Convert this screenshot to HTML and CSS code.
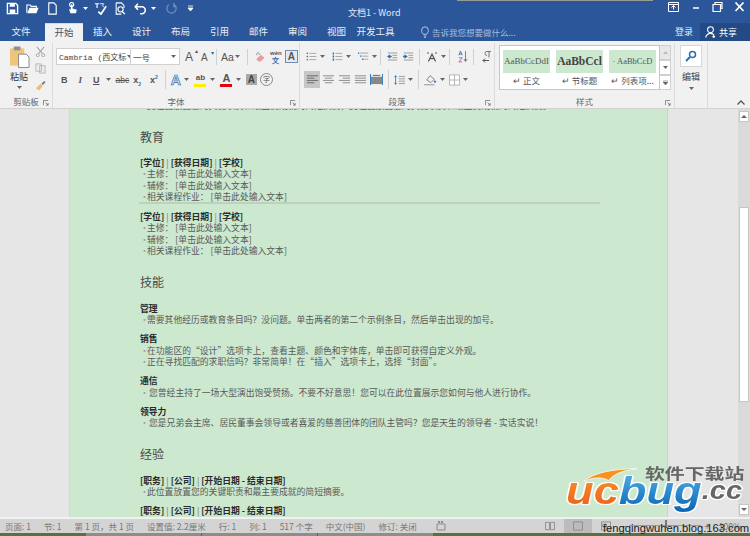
FILE: index.html
```html
<!DOCTYPE html>
<html lang="zh-CN">
<head>
<meta charset="utf-8">
<title>文档1 - Word</title>
<link rel="stylesheet" href="styles.css">
</head>
<body>
<svg class="defs" width="0" height="0">
  <symbol id="caret" viewBox="0 0 5 3"><path d="M0 0h5L2.500 3z" fill="#666"/></symbol>
  <symbol id="caretw" viewBox="0 0 5 3"><path d="M0 0h5L2.500 3z" fill="#fff"/></symbol>
  <symbol id="launch" viewBox="0 0 7 7"><path d="M.5 6V.5H6M3 3l3 3M6 3.500V6H3.500" fill="none" stroke="#777"/></symbol>
</svg>
<div class="app">
  <div class="top-sliver"></div>
  <header class="titlebar">
    <div class="qat">
      <svg class="qi" viewBox="0 0 14 14"><path d="M1.500 1.500h9l2 2v9h-11z" fill="none" stroke="#fff" stroke-width="1.500"/><path d="M4 1.500h5.500v3.500H4zM4 8h6v4.500H4z" fill="#fff"/></svg>
      <svg class="qi" viewBox="0 0 15 14"><path d="M1 12V3h4l1 1.500h6V6" fill="none" stroke="#fff" stroke-width="1.300"/><path d="M1.500 12.500L4 6h10.500l-2.500 6.500z" fill="#fff"/></svg>
      <svg class="qi" viewBox="0 0 14 14"><path d="M3 1h5.500L11 3.500V13H3z" fill="none" stroke="#fff" stroke-width="1.200"/></svg>
      <span class="qgroup"><svg class="qi" viewBox="0 0 12 15"><circle cx="5" cy="3" r="2.400" fill="none" stroke="#fff" stroke-width="1.300"/><path d="M4 3v6L2 8l1.500 5h6.500l1-4-5-1.500V3" fill="#fff"/></svg><svg class="ca" viewBox="0 0 5 3"><use href="#caretw"/></svg></span>
      <svg class="qi" viewBox="0 0 15 15"><path d="M1 2h5M3.500 2v5" stroke="#fff" stroke-width="1.300" fill="none"/><path d="M5 11l3 3 6-9" stroke="#fff" stroke-width="2" fill="none"/><path d="M7 2h4l-1 2 1 2" stroke="#fff" fill="none"/></svg>
      <svg class="qi" viewBox="0 0 14 15"><path d="M2 1h6l3 3v3M2 1v13h6" fill="none" stroke="#fff" stroke-width="1.200"/><circle cx="7" cy="8.500" r="3" fill="none" stroke="#fff" stroke-width="1.300"/><path d="M9 11l3 3" stroke="#fff" stroke-width="1.600"/></svg>
      <span class="qgroup"><svg class="qi" viewBox="0 0 15 14"><path d="M4.500 1.500L1.500 5l3 3.500" fill="none" stroke="#fff" stroke-width="1.800"/><path d="M2 5h7a4 4 0 0 1 0 8H7" fill="none" stroke="#fff" stroke-width="1.800"/></svg><svg class="ca" viewBox="0 0 5 3"><use href="#caretw"/></svg></span>
      <svg class="qi dim" viewBox="0 0 14 14"><path d="M4 3a5 5 0 1 0 6 0M9.500 1v4h3" fill="none" stroke="#6f8fc0" stroke-width="1.300"/></svg>
      <svg class="qi small" viewBox="0 0 7 7"><path d="M1 1h5M1 3h5L3.500 6z" stroke="#fff" fill="#fff" stroke-width=".8"/></svg>
    </div>
    <div class="doc-title">文档1 - Word</div>
    <div class="win">
      <svg class="wi" viewBox="0 0 11 10"><path d="M.5.500h10v9H.5z" fill="none" stroke="#fff"/><path d="M.5 2.500h10" stroke="#fff"/><path d="M5.500 3.500v4M3.500 5.500L5.500 3.500 7.500 5.500" fill="none" stroke="#fff"/></svg>
      <svg class="wi" viewBox="0 0 11 10"><path d="M3 6h6" stroke="#fff" stroke-width="1.500"/></svg>
      <svg class="wi" viewBox="0 0 11 10"><path d="M3 2V.5h7v6H8.500M1 2.500h7.500v7H1z" fill="none" stroke="#fff" stroke-width="1.200"/></svg>
      <svg class="wi" viewBox="0 0 11 10"><path d="M1.500.5l8 8.500M9.500.5l-8 8.500" stroke="#fff" stroke-width="1.700"/></svg>
    </div>
  </header>
  <nav class="tabs">
    <span class="tab file">文件</span>
    <span class="tab active">开始</span>
    <span class="tab">插入</span>
    <span class="tab">设计</span>
    <span class="tab">布局</span>
    <span class="tab">引用</span>
    <span class="tab">邮件</span>
    <span class="tab">审阅</span>
    <span class="tab">视图</span>
    <span class="tab">开发工具</span>
    <span class="tell">
      <svg class="bulb" viewBox="0 0 9 13"><path d="M2.500 9C1.500 7.500.7 6.500.7 4.500a3.800 3.800 0 0 1 7.600 0C8.300 6.500 7.500 7.500 6.500 9zM3 11h3M3.500 12.500h2" fill="none" stroke="#c6d3e6"/></svg>告诉我您想要做什么...
    </span>
    <span class="login">登录</span>
    <span class="share"><svg class="person" viewBox="0 0 12 13"><circle cx="6" cy="4" r="3.200" fill="none" stroke="#fff" stroke-width="1.200"/><path d="M.7 12.500C1.500 9.500 3 8 6 8c1.500 0 3 .5 4 2M9.500 10v3M8 11.500h3" fill="none" stroke="#fff" stroke-width="1.200"/></svg>共享</span>
  </nav>
  <section class="ribbon">
    <div class="group g-clip">
      <div class="g-body clip-body">
        <div class="paste">
          <svg class="paste-ico" viewBox="0 0 22 24"><path d="M1 3h15v18H1z" fill="#edc67c"/><path d="M5 1h7v4H5z" fill="#8f8f8f"/><path d="M10 9h8l3 3v11H10z" fill="#fff" stroke="#888"/></svg>
          <span class="paste-t">粘贴</span>
          <svg class="ca" viewBox="0 0 5 3"><use href="#caret"/></svg>
        </div>
        <div class="clip-side">
          <svg class="ci" viewBox="0 0 12 12"><path d="M2 1l6 7M10 1L4 8" stroke="#a6a6a6" fill="none" stroke-width="1.200"/><circle cx="3" cy="10" r="1.700" fill="none" stroke="#a6a6a6"/><circle cx="9" cy="10" r="1.700" fill="none" stroke="#a6a6a6"/></svg>
          <svg class="ci" viewBox="0 0 12 12"><path d="M1 1h6v8H1zM5 3h6v8H5z" fill="#eee" stroke="#b5b5b5"/></svg>
          <svg class="ci" viewBox="0 0 12 12"><path d="M7 4l3-3 1.500 1.500-3 3z" fill="#777"/><path d="M1 9l5-5 2.500 2.500-4 5z" fill="#e5bf70"/></svg>
        </div>
      </div>
      <div class="g-label">剪贴板<svg class="launch" viewBox="0 0 7 7"><use href="#launch"/></svg></div>
    </div>
    <div class="group g-font">
      <div class="g-body font-body">
        <div class="rrow">
          <div class="combo">
            <span class="cb cb-font">Cambria (西文标<svg class="ca" viewBox="0 0 5 3"><use href="#caret"/></svg></span>
            <span class="cb cb-size">一号<svg class="ca" viewBox="0 0 5 3"><use href="#caret"/></svg></span>
          </div>
          <span class="glyph g16">A<i class="hat">▴</i></span>
          <span class="glyph g14">A<i class="hat blue">▾</i></span>
          <span class="vsep fs1"></span>
          <span class="glyph g-aa">Aa<svg class="ca" viewBox="0 0 5 3"><use href="#caret"/></svg></span>
          <span class="vsep fs2"></span>
          <svg class="ri" viewBox="0 0 16 16"><path d="M6 1L3 5h1M5.500 4h3" stroke="#7a7a7a" fill="none"/><path d="M3 11l6-6 5 4-5 5H6z" fill="#f09aa0"/></svg>
          <span class="wen"><b>wén</b><b class="wen-b">文</b></span>
          <span class="boxA">A</span>
        </div>
        <div class="rrow row2">
          <b class="fmt bd">B</b>
          <i class="fmt it">I</i>
          <span class="fmt un">U</span><svg class="ca" viewBox="0 0 5 3"><use href="#caret"/></svg>
          <span class="fmt st">abc</span>
          <span class="fmt sub">x<sub>2</sub></span>
          <span class="fmt sub">x<sup>2</sup></span>
          <span class="vsep tall"></span>
          <span class="outlineA">A</span><svg class="ca" viewBox="0 0 5 3"><use href="#caret"/></svg>
          <span class="hl"><span class="hl-t">ab</span><span class="bar yellow"></span></span><svg class="ca" viewBox="0 0 5 3"><use href="#caret"/></svg>
          <span class="hl"><span class="hl-a">A</span><span class="bar red"></span></span><svg class="ca" viewBox="0 0 5 3"><use href="#caret"/></svg>
          <span class="shadeA">A</span>
          <span class="circ">字</span>
        </div>
      </div>
      <div class="g-label">字体<svg class="launch" viewBox="0 0 7 7"><use href="#launch"/></svg></div>
    </div>
    <div class="group g-para">
      <div class="g-body para-body">
        <div class="rrow prow r1">
          <svg class="pi" viewBox="0 0 16 13"><path d="M1 1h2v2H1zM1 5.500h2v2H1zM1 10h2v2H1z" fill="#2b6cb0"/><path d="M5 2h10M5 6.500h10M5 11h10" stroke="#8a8a8a"/></svg><svg class="ca" viewBox="0 0 5 3"><use href="#caret"/></svg>
          <svg class="pi" viewBox="0 0 16 13"><path d="M1 .5h2v3H1zM1 5h2v3H1zM1 9.500h2v3H1z" fill="#2b6cb0"/><path d="M5 2h10M5 6.500h10M5 11h10" stroke="#8a8a8a"/></svg><svg class="ca" viewBox="0 0 5 3"><use href="#caret"/></svg>
          <svg class="pi" viewBox="0 0 16 13"><path d="M0 .5h2v2H0zM3 5h2v2H3zM6 9.500h2v2H6z" fill="#2b6cb0"/><path d="M3 1.500h12M6 6h9M9 10.500h6" stroke="#8a8a8a"/></svg><svg class="ca" viewBox="0 0 5 3"><use href="#caret"/></svg>
          <span class="vsep"></span>
          <svg class="pi" viewBox="0 0 14 12"><path d="M1 1.500h12M7 4.500h6M7 7.500h6M1 10.500h12" stroke="#8a8a8a"/><path d="M0 6l4-3v2h2v2H4v2z" fill="#2b6cb0"/></svg>
          <svg class="pi" viewBox="0 0 14 12"><path d="M1 1.500h12M7 4.500h6M7 7.500h6M1 10.500h12" stroke="#8a8a8a"/><path d="M6 6L2 3v2H0v2h2v2z" fill="#2b6cb0"/></svg>
          <span class="vsep s-i"></span>
          <svg class="pi wide" viewBox="0 0 15 13"><path d="M3 12L7.500 3 12 12M5 8.500h5" stroke="#555" fill="none" stroke-width="1.500"/><path d="M1 1h3L2.500 3zM11 1h3l-1.500 2z" fill="#2b6cb0"/></svg><svg class="ca" viewBox="0 0 5 3"><use href="#caret"/></svg>
          <span class="vsep"></span>
          <svg class="pi narrow" viewBox="0 0 12 15"><path d="M1 6L3 1l2 5M1.500 4.500h3" stroke="#2b6cb0" fill="none"/><path d="M1 9h4L1 14h4" stroke="#9b59b6" fill="none"/><path d="M9 1v12M7 10.500L9 13.500 11 10.500" stroke="#666" fill="none"/></svg>
          <span class="vsep s-i"></span>
          <svg class="pi narrow" viewBox="0 0 10 12"><path d="M5 1h4M7 1v6M5 1a2 2 0 0 0 0 4" stroke="#777" fill="none"/><path d="M1 10h6M3 8l-2 2 2 2" stroke="#555" fill="none"/></svg>
        </div>
        <div class="rrow prow row2 r2">
          <span class="align on"><svg class="pi" viewBox="0 0 14 11"><path d="M1 1.500h12M1 4h8M1 6.500h12M1 9h8" stroke="#666"/></svg></span>
          <span class="align"><svg class="pi" viewBox="0 0 14 11"><path d="M1 1.500h12M3 4h8M1 6.500h12M3 9h8" stroke="#888"/></svg></span>
          <span class="align"><svg class="pi" viewBox="0 0 14 11"><path d="M1 1.500h12M5 4h8M1 6.500h12M5 9h8" stroke="#888"/></svg></span>
          <span class="align"><svg class="pi" viewBox="0 0 14 11"><path d="M1 1.500h12M1 4h12M1 6.500h12M1 9h12" stroke="#888"/></svg></span>
          <span class="align"><svg class="pi" viewBox="0 0 14 12"><path d="M1 3h12v8H1z" fill="#888"/><path d="M.5 0v12M13.500 0v12" stroke="#2b6cb0"/><path d="M3 1.500h8" stroke="#2b6cb0"/></svg></span>
          <span class="vsep tall"></span>
          <svg class="pi ls" viewBox="0 0 14 13"><path d="M2 1v11M.5 3L2 1l1.500 2M.5 10L2 12l1.500-2" stroke="#2b6cb0" fill="none"/><path d="M6 2h8M6 5h8M6 8h8M6 11h8" stroke="#888"/></svg><svg class="ca" viewBox="0 0 5 3"><use href="#caret"/></svg>
          <span class="vsep tall"></span>
          <svg class="pi shade" viewBox="0 0 15 14"><path d="M3 7l4-5 5 4-4 4z" fill="none" stroke="#777"/><path d="M12 8l1.500 2" stroke="#2b6cb0" stroke-width="2"/><path d="M0 12.500h12" stroke="#aaa" stroke-width="1.500"/></svg><svg class="ca m4" viewBox="0 0 5 3"><use href="#caret"/></svg>
          <svg class="pi" viewBox="0 0 13 13"><path d="M.5.500h12v12H.5zM6.500.5v12M.5 6.500h12" stroke="#aaa" fill="#fff"/></svg><svg class="ca" viewBox="0 0 5 3"><use href="#caret"/></svg>
        </div>
      </div>
      <div class="g-label">段落<svg class="launch" viewBox="0 0 7 7"><use href="#launch"/></svg></div>
    </div>
    <div class="group g-style">
      <div class="g-body style-body">
        <div class="gallery">
          <div class="sty"><div class="sty-s s1">AaBbCcDdI</div><div class="sty-n">↵ 正文</div></div>
          <div class="sty"><div class="sty-s s2">AaBbCcl</div><div class="sty-n">↵ 节标题</div></div>
          <div class="sty"><div class="sty-s s1 s3">· AaBbCcD</div><div class="sty-n">↵ 列表项...</div></div>
        </div>
        <div class="gal-btns">
          <span class="gb muted"><svg class="ga" viewBox="0 0 5 3"><path d="M0 3h5L2.500 0z" fill="#bbb"/></svg></span>
          <span class="gb"><svg class="ga" viewBox="0 0 5 3"><use href="#caret"/></svg></span>
          <span class="gb"><svg class="ga" viewBox="0 0 5 5"><path d="M0 0h5M0 2h5L2.500 5z" stroke="#666" stroke-width=".6" fill="#666"/></svg></span>
        </div>
      </div>
      <div class="g-label">样式<svg class="launch" viewBox="0 0 7 7"><use href="#launch"/></svg></div>
    </div>
    <div class="group g-edit">
      <span class="find"><svg class="lens" viewBox="0 0 12 12"><circle cx="7.500" cy="4.500" r="3" fill="none" stroke="#2b6cb0" stroke-width="1.500"/><path d="M5 7l-4 4" stroke="#2b6cb0" stroke-width="2"/></svg></span>
      <span class="edit-t">编辑</span>
      <svg class="ca" viewBox="0 0 5 3"><use href="#caret"/></svg>
    </div>
    <div class="group g-end">
      <svg class="collapse" viewBox="0 0 8 5"><path d="M.5 4.500L4 1l3.500 3.500" fill="none" stroke="#555" stroke-width="1.300"/></svg>
    </div>
  </section>
  <main class="workspace">
    <div class="gutter left"></div>
    <article class="page">
      <p class="li cut">此位置放置您的关键职责和最主要成就的简短摘要，此位置放置您的关键职责和最主要成就的简短摘要。</p>
      <h2 class="h first">教育</h2>
      <p class="ent">[学位] <span class="pipe">|</span> [获得日期] <span class="pipe">|</span> [学校]</p>
      <p class="li">主修： [单击此处输入文本]</p>
      <p class="li">辅修： [单击此处输入文本]</p>
      <p class="li">相关课程作业： [单击此处输入文本]</p>
      <hr class="rule">
      <p class="ent">[学位] <span class="pipe">|</span> [获得日期] <span class="pipe">|</span> [学校]</p>
      <p class="li">主修： [单击此处输入文本]</p>
      <p class="li">辅修： [单击此处输入文本]</p>
      <p class="li">相关课程作业： [单击此处输入文本]</p>
      <h2 class="h">技能</h2>
      <p class="ent">管理</p>
      <p class="li">需要其他经历或教育条目吗？没问题。单击两者的第二个示例条目，然后单击出现的加号。</p>
      <p class="ent gap">销售</p>
      <p class="li">在功能区的“设计”选项卡上，查看主题、颜色和字体库，单击即可获得自定义外观。</p>
      <p class="li">正在寻找匹配的求职信吗？非常简单！在“插入”选项卡上，选择“封面”。</p>
      <p class="ent gap">通信</p>
      <p class="li in">您曾经主持了一场大型演出饱受赞扬。不要不好意思！您可以在此位置展示您如何与他人进行协作。</p>
      <p class="ent gap">领导力</p>
      <p class="li in">您是兄弟会主席、居民董事会领导或者喜爱的慈善团体的团队主管吗？您是天生的领导者 - 实话实说！</p>
      <h2 class="h">经验</h2>
      <p class="ent">[职务] <span class="pipe">|</span> [公司] <span class="pipe">|</span> [开始日期 - 结束日期]</p>
      <p class="li">此位置放置您的关键职责和最主要成就的简短摘要。</p>
      <p class="ent gap">[职务] <span class="pipe">|</span> [公司] <span class="pipe">|</span> [开始日期 - 结束日期]</p>
    </article>
    <div class="gutter right"></div>
    <div class="scrollbar">
      <span class="sb-btn"><svg class="sb-a" viewBox="0 0 6 3"><path d="M0 3h6L3 0z" fill="#666"/></svg></span>
      <span class="sb-thumb"></span>
      <span class="sb-btn bottom"><svg class="sb-a" viewBox="0 0 6 3"><path d="M0 0h6L3 3z" fill="#666"/></svg></span>
    </div>
  </main>
  <footer class="status">
    <span>页面: 1</span><span>节: 1</span><span>第 1 页，共 1 页</span><span>设置值: 2.2厘米</span><span>行: 1</span><span>列: 1</span><span>517 个字</span><span>中文(中国)</span><span>修订: 关闭</span>
    <svg class="st-i macro" viewBox="0 0 10 10"><path d="M1 3h8v6H1z" fill="none" stroke="#8a8a8a"/><path d="M2 0h2v2H2zM5 0h2v2H5z" fill="#8a8a8a"/></svg>
    <span class="views">
      <span class="view"><svg class="st-i" viewBox="0 0 11 10"><path d="M.5 1H5v8H.5zM6 1h4.500v8H6z" fill="none" stroke="#8a8a8a"/></svg></span>
      <span class="view on"><svg class="st-i" viewBox="0 0 11 10"><path d="M.5.500h10v9H.5z" fill="#bbb" stroke="#8a8a8a"/></svg></span>
      <span class="view"><svg class="st-i" viewBox="0 0 11 10"><path d="M.5.500h10v9H.5zM2 3h4v3H2z" fill="none" stroke="#8a8a8a"/></svg></span>
    </span>
    <span class="zoom"><span class="zm">−</span><span class="slider"><span class="knob"></span></span><span class="zm">+</span><span class="pct">100%</span></span>
  </footer>
  <div class="desktop"><span class="d1"></span><span class="d2"></span><span class="d3"></span></div>
  <div class="blogmark">fengqingwuhen.blog.163.com</div>
  <div class="logo">
    <svg class="swoosh" viewBox="0 0 70 18"><path d="M0 17C12 7 35 1 68 1 50 3 38 8 32 16 22 11 12 12 0 17z" fill="#f7931e" stroke="#fff"/></svg>
    <div class="logo-cn">软件下载站</div>
    <div class="logo-en"><span class="l-o">uc</span><span class="l-b">bug</span><span class="l-c">.cc</span></div>
  </div>
</div>
</body>
</html>
```
FILE: styles.css
```css
* { box-sizing: border-box; }
html, body { margin: 0; padding: 0; }
body {
  width: 750px;
  height: 536px;
  overflow: hidden;
  font-family: "Noto Sans CJK SC", "Liberation Sans", sans-serif;
}
.defs { position: absolute; }
.app {
  position: relative;
  width: 750px;
  height: 536px;
  display: flex;
  flex-direction: column;
  overflow: hidden;
  background: #e6e6e6;
}
.ca { width: 5px; height: 3px; flex: none; }

.top-sliver {
  position: absolute;
  left: 457px;
  top: 0;
  width: 196px;
  height: 1px;
  background: #9a9a9a;
}

/* title bar */
.titlebar {
  height: 22px;
  background: #2b579a;
  display: flex;
  align-items: center;
  padding: 0 5px 0 6px;
  color: #fff;
  flex: none;
}
.qat { width: 196px; display: flex; align-items: center; gap: 6px; height: 18px; margin-top: -5px; }
.qi { width: 13px; height: 13px; flex: none; margin-right: 1px; }
.qi.small { width: 7px; height: 7px; margin-left: 2px; }
.qi.dim { margin-left: 3px; }
.qgroup { display: flex; align-items: center; gap: 3px; }
.doc-title {
  position: absolute;
  left: 348px;
  top: 6px;
  font-size: 9px;
  line-height: 13px;
  color: #e3e9f3;
}
.win { margin-left: auto; display: flex; gap: 11px; align-items: center; margin-top: -8px; }
.wi { width: 11px; height: 10px; }

/* tabs */
.tabs {
  height: 19px;
  background: #2b579a;
  display: flex;
  align-items: flex-end;
  flex: none;
  color: #e8edf5;
  font-size: 9.500px;
  padding-left: 2px;
}
.tab { width: 39px; height: 18px; line-height: 17px; text-align: center; flex: none; }
.tab.file { width: 38px; margin-right: 5px; }
.tab.active {
  background: #f1f1f1;
  color: #44546a;
  width: 38px;
  height: 18px;
  border-top: 1px solid #d8d8d8;
}
.tab:last-of-type { width: auto; padding: 0 0 0 9px; }
.tell {
  margin-left: 26px;
  height: 18px;
  display: flex;
  align-items: center;
  font-size: 8.500px;
  color: #a9bcd8;
  gap: 3px;
}
.bulb { width: 8px; height: 12px; }
.login { margin-left: auto; margin-right: 7px; height: 18px; line-height: 17px; font-size: 9px; }
.share {
  width: 50px;
  height: 18px;
  background: #234a85;
  display: flex;
  align-items: center;
  gap: 3px;
  padding-left: 5px;
  font-size: 9px;
  color: #fff;
}
.person { width: 11px; height: 12px; }

/* ribbon */
.ribbon {
  height: 68px;
  background: #f1f1f1;
  display: flex;
  flex: none;
  border-bottom: 1px solid #d2d2d2;
  color: #444;
}
.group {
  position: relative;
  display: flex;
  flex-direction: column;
  border-right: 1px solid #dcdcdc;
  flex: none;
  margin: 2px 0 0;
}
.g-body { flex: 1; min-height: 0; }
.g-label {
  position: relative;
  height: 13px;
  line-height: 12px;
  font-size: 8.500px;
  text-align: center;
  color: #666;
}
.launch { position: absolute; right: 3px; bottom: 2px; width: 6px; height: 6px; }
.g-clip { width: 53px; }
.g-font { width: 247px; }
.g-para { width: 195px; }
.g-style { width: 180px; }
.g-edit { width: 33px; align-items: center; }
.g-end { flex: 1; border-right: 0; position: relative; }

.clip-body { display: flex; padding: 2px 0 0 8px; gap: 5px; }
.paste { width: 22px; display: flex; flex-direction: column; align-items: center; }
.paste-ico { width: 21px; height: 24px; }
.paste-t { font-size: 9px; line-height: 13px; margin-top: 1px; color: #333; }
.paste .ca { margin-top: 3px; }
.clip-side { display: flex; flex-direction: column; gap: 6px; padding-top: 1px; }
.ci { width: 11px; height: 11px; }

.font-body { padding: 3px 0 0 3px; }
.rrow { display: flex; align-items: center; height: 21px; }
.row2 { margin-top: 1px; height: 23px; padding-left: 4px; }
.combo { display: flex; background: #fff; border: 1px solid #d0d0d0; height: 17px; }
.cb {
  display: flex;
  align-items: center;
  height: 15px;
  font-size: 8.500px;
  color: #444;
  white-space: nowrap;
  padding-left: 2px;
}
.cb-font { width: 74px; border-right: 1px solid #d0d0d0; font-family: "Liberation Mono", "Noto Sans CJK SC", monospace; font-size: 8px; overflow: hidden; gap: 1px; }
.cb-size { width: 48px; justify-content: space-between; padding-right: 3px; }
.glyph { position: relative; color: #555; font-family: "Liberation Sans", sans-serif; flex: none; }
.g16 { font-size: 12px; margin-left: 5px; width: 13px; }
.g14 { font-size: 10px; margin-left: 3px; width: 13px; top: 1px; }
.hat { position: absolute; right: 0; top: -3px; font-size: 6px; font-style: normal; color: #555; }
.hat.blue { color: #2b6cb0; }
.vsep { width: 1px; height: 16px; background: #d0d0d0; margin: 0 5px; flex: none; }
.vsep.tall { height: 19px; }
.vsep.fs1 { margin: 0 4px 0 2px; }
.vsep.fs2 { margin: 0 6px 0 7px; }
.g-aa { display: flex; align-items: center; gap: 1px; font-size: 10.500px; }
.ri { width: 12px; height: 12px; flex: none; }
.wen {
  display: flex;
  flex-direction: column;
  align-items: center;
  margin-left: 4px;
  font-size: 6px;
  line-height: 7px;
  color: #555;
  font-family: "Liberation Sans", sans-serif;
  width: 12px;
  flex: none;
}
.wen-b { color: #2b6cb0; font-size: 7px; }
.boxA {
  width: 13px;
  height: 13px;
  margin-left: 3px;
  flex: none;
  border: 1px solid #6e8db5;
  font: 700 10px/11px "Liberation Sans", sans-serif;
  text-align: center;
  color: #555;
  background: #e4e9f0;
}
.fmt {
  font: 700 9px/14px "Liberation Sans", sans-serif;
  color: #555;
  flex: none;
  margin-right: 9px;
  white-space: nowrap;
}
.fmt.bd { margin-left: 1px; margin-right: 11px; }
.fmt.it { font: italic 700 9px/14px "Liberation Serif", serif; margin-right: 11px; }
.fmt.un { text-decoration: underline; margin-right: 6px; }
.fmt.st { text-decoration: line-through; margin-left: 5px; margin-right: 4px; font-weight: 400; font-size: 8.500px; }
.fmt.sub sub, .fmt.sub sup { font-size: 5px; line-height: 0; color: #2b6cb0; }
.row2 .vsep { margin: 0 5px 0 -2px; }
.outlineA { font: 700 14px/16px "Liberation Sans", sans-serif; color: #d6e5f6; -webkit-text-stroke: .7px #2b6cb0; margin-right: 3px; }
.row2 .outlineA + .ca { margin-right: 5px; }
.hl { width: 13px; display: flex; flex-direction: column; align-items: center; margin-right: 3px; flex: none; }
.hl + .ca { margin-right: 5px; }
.hl-t { font: 700 8px/10px "Liberation Sans", sans-serif; color: #555; height: 11px; }
.hl-a { font: 700 11px/11px "Liberation Sans", sans-serif; color: #555; height: 11px; }
.bar { width: 12px; height: 3px; flex: none; }
.yellow { background: #ffef00; }
.red { background: #e8000d; }
.shadeA { width: 11px; height: 11px; background: #a8a8a8; color: #444; font: 700 10px/11px "Liberation Sans", sans-serif; text-align: center; flex: none; }
.circ { width: 13px; height: 13px; border: 1px solid #888; border-radius: 50%; font-size: 7px; line-height: 11px; text-align: center; margin-left: 3px; color: #555; flex: none; }

.para-body { padding: 3px 0 0 6px; }
.pi { width: 11px; height: 11px; flex: none; }
.pi.wide { width: 12px; height: 12px; }
.pi.narrow { width: 10px; height: 13px; margin-left: 2px; }
.r1 .ca { margin: 0 7px 0 3px; }
.r1 .vsep { margin: 0 6px 0 -4px; }
.r1 .vsep.s-i { margin: 0 6px 0 5px; }
.r1 .pi + .pi { margin-left: 5px; }
.r2 { padding-left: 0; margin-left: -2px; }
.align { width: 16px; height: 17px; display: flex; align-items: center; justify-content: center; flex: none; }
.align .pi { width: 13px; height: 11px; }
.align.on { background: #c6c6c6; }
.r2 .vsep { margin: 0 5px 0 4px; }
.r2 .ca { margin: 0 1px 0 3px; }
.r2 .ca.m4 { margin-right: 4px; }
.pi.shade { width: 13px; height: 13px; }
.r2 > .pi { height: 12px; }

.style-body { display: flex; padding: 2px 0 0 4px; }
.gallery {
  display: flex;
  width: 161px;
  height: 45px;
  background: #fff;
  border: 1px solid #c6c6c6;
  padding: 4px 3px 0;
  gap: 6px;
}
.sty { width: 47px; flex: none; }
.sty-s {
  height: 23px;
  background: #cce8cf;
  font: 9px/23px "Liberation Serif", serif;
  color: #555;
  text-align: center;
  overflow: hidden;
  white-space: nowrap;
}
.s2 { font-weight: 700; font-size: 11.500px; color: #444; }
.s3 { font-size: 8.500px; }
.sty-n { font-size: 8.500px; line-height: 15px; text-align: center; color: #555; white-space: nowrap; }
.gal-btns { width: 11px; display: flex; flex-direction: column; height: 45px; }
.gb { height: 15px; display: flex; align-items: center; justify-content: center; background: #fff; border: 1px solid #d0d0d0; border-left: 0; }
.gb.muted { background: #e8e8e8; }
.ga { width: 5px; height: 3px; }
.gb:last-child .ga { height: 5px; }

.find { margin-top: 2px; width: 22px; height: 22px; background: #fff; border: 1px solid #d6d6d6; display: flex; align-items: center; justify-content: center; }
.lens { width: 12px; height: 12px; }
.edit-t { font-size: 9px; line-height: 13px; margin-top: 3px; color: #444; }
.g-edit .ca { margin-top: 4px; }
.collapse { position: absolute; right: 5px; bottom: 3px; width: 8px; height: 5px; }

/* workspace */
.workspace { flex: 1; min-height: 0; display: flex; background: #e6e6e6; }
.gutter.left { width: 70px; flex: none; border-right: 1px solid #d6d6d6; }
.gutter.right { width: 71px; flex: none; border-left: 1px solid #d0d0d0; }
.page {
  width: 597px;
  flex: none;
  background: #cce8cf;
  overflow: hidden;
  padding-left: 70px;
  color: #555;
  font-size: 8.800px;
  line-height: 11.500px;
}
.page p { margin: 0; white-space: nowrap; }
.li { position: relative; padding-left: 7px; color: #5a5a5a; }
.li.in { padding-left: 9px; }
.li::before { content: "·"; position: absolute; left: 0; color: #9a9a9a; }
.page .li.cut { margin-top: -9.500px; }
.h { margin: 16px 0 13px; font-size: 12px; line-height: 17px; font-weight: 400; color: #4a4a4a; }
.h.first { margin-top: 16.500px; margin-bottom: 12px; }
.ent { font-weight: 700; color: #2a2a2a; }
.pipe { font-weight: 400; color: #777; }
.page .gap { margin-top: 7.500px; }
.rule { height: 2px; border: 0; background: #bcd2bf; margin: -1px 67px 7px -1px; }

.scrollbar { width: 12px; flex: none; background: #dadada; display: flex; flex-direction: column; align-items: center; position: relative; }
.sb-btn { width: 10px; height: 11px; margin-top: 2px; background: #fff; border: 1px solid #c6c6c6; display: flex; align-items: center; justify-content: center; flex: none; }
.sb-btn.bottom { margin-top: auto; margin-bottom: 2px; }
.sb-a { width: 6px; height: 3px; }
.sb-thumb { width: 10px; height: 195px; margin-top: 85px; background: #fff; border: 1px solid #c6c6c6; flex: none; }

/* status */
.status {
  height: 16px;
  flex: none;
  background: #d4d4d4;
  border-top: 2px solid #f1f1f1;
  display: flex;
  align-items: center;
  padding: 0 0 1px 5px;
  gap: 13px;
  font-size: 8.500px;
  color: #777;
  white-space: nowrap;
}
.st-i { width: 10px; height: 10px; flex: none; }
.st-i.macro { margin-left: 6px; }
.views { display: flex; margin-left: 77px; }
.view { width: 28px; height: 14px; display: flex; align-items: center; justify-content: center; }
.view.on { background: #bcbcbc; }
.zoom { display: flex; align-items: center; gap: 3px; margin-left: -12px; }
.zm { color: #777; font-size: 10px; line-height: 10px; }
.slider { position: relative; width: 72px; height: 1px; background: #999; }
.knob { position: absolute; left: 36px; top: -5px; width: 2px; height: 8px; background: #777; }
.pct { margin-left: 6px; }

.desktop { height: 3px; flex: none; background: #5a7040; display: flex; padding-left: 86px; gap: 1px; }
.d1, .d2, .d3 { height: 3px; width: 115px; background: #8b8f84; }
.blogmark {
  position: absolute;
  left: 603px;
  top: 522px;
  font: 11.200px/13px "Liberation Sans", sans-serif;
  color: #1a1a1a;
  white-space: nowrap;
}

/* overlaid watermark */
.logo { position: absolute; left: 566px; top: 464px; width: 184px; height: 56px; }
.swoosh { position: absolute; left: 16px; top: 4px; width: 58px; height: 14px; }
.logo-cn {
  position: absolute;
  left: 79px;
  top: 0;
  font-size: 14.500px;
  line-height: 18px;
  font-weight: 700;
  color: #666;
  white-space: nowrap;
  transform: scaleX(1.37);
  transform-origin: left top;
}
.logo-en {
  position: absolute;
  left: 0;
  top: 7px;
  font: italic 700 39px/40px "Liberation Sans", sans-serif;
  white-space: nowrap;
  transform: scaleX(1.16);
  transform-origin: left top;
  filter: drop-shadow(1px 0 0 #fff) drop-shadow(-1px 0 0 #fff) drop-shadow(0 1px 0 #fff) drop-shadow(0 -1px 0 #fff);
}
.l-o { background: linear-gradient(#fa9a28, #ee5a1c); -webkit-background-clip: text; background-clip: text; color: transparent; }
.l-b { background: linear-gradient(#56b6ec, #0a64b4); -webkit-background-clip: text; background-clip: text; color: transparent; }
.l-c { position: relative; top: -5px; color: #666; font-size: 25px; }
```
